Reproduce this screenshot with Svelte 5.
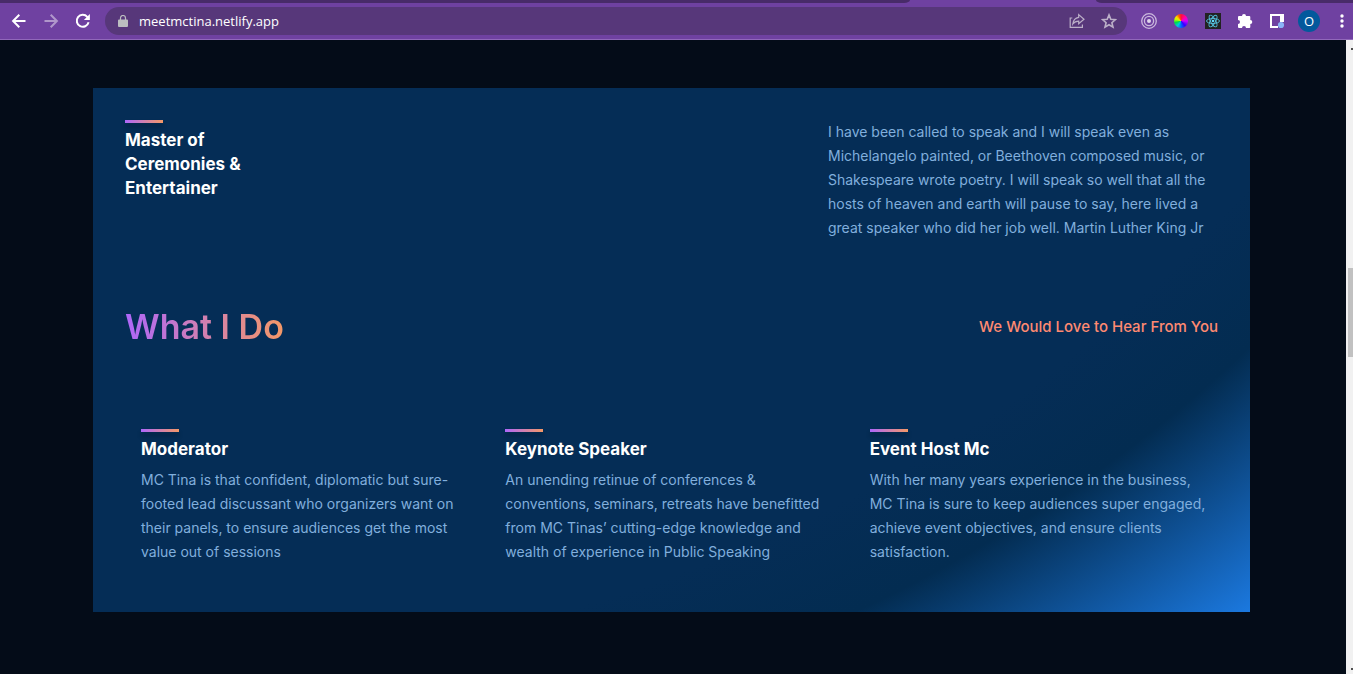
<script>
  const address = 'meetmctina.netlify.app';
  const services = [
    {
      title: 'Moderator',
      lines: ['MC Tina is that confident, diplomatic but sure-', 'footed lead discussant who organizers want on', 'their panels, to ensure audiences get the most', 'value out of sessions']
    },
    {
      title: 'Keynote Speaker',
      lines: ['An unending retinue of conferences &', 'conventions, seminars, retreats have benefitted', 'from MC Tinas’ cutting-edge knowledge and', 'wealth of experience in Public Speaking']
    },
    {
      title: 'Event Host Mc',
      lines: ['With her many years experience in the business,', 'MC Tina is sure to keep audiences super engaged,', 'achieve event objectives, and ensure clients', 'satisfaction.']
    }
  ];
  const quote = [
    'I have been called to speak and I will speak even as',
    'Michelangelo painted, or Beethoven composed music, or',
    'Shakespeare wrote poetry. I will speak so well that all the',
    'hosts of heaven and earth will pause to say, here lived a',
    'great speaker who did her job well. Martin Luther King Jr'
  ];
</script>

<div class="browser">
  <div class="tabs"><span class="tab left"></span><span class="tab right"></span></div>
  <header class="toolbar">
    <nav class="history" aria-label="History">
      <button aria-label="Back">
        <svg viewBox="0 0 16 16"><path d="M14.5 8H2.5M8.3 1.8 2.1 8l6.2 6.2" /></svg>
      </button>
      <button class="dim" aria-label="Forward">
        <svg viewBox="0 0 16 16"><path d="M1.5 8h12M7.7 1.8 13.9 8l-6.2 6.2" /></svg>
      </button>
      <button aria-label="Reload">
        <svg viewBox="0 0 16 16"><path d="M13.6 9.3A6 6 0 1 1 12.3 3.8L13.4 5" /><path class="solid" d="M14.9 1v6H8.9z" /></svg>
      </button>
    </nav>
    <div class="omnibox">
      <svg class="lock" viewBox="0 0 10 12"><path d="M1 4.5h8a1 1 0 0 1 1 1V11a1 1 0 0 1-1 1H1a1 1 0 0 1-1-1V5.500a1 1 0 0 1 1-1z" fill="#bcbec0" /><path d="M2.500 5V3a2.500 2.500 0 0 1 5 0v2" fill="none" stroke="#bcbec0" stroke-width="1.200" /></svg>
      <input aria-label="Address" value={address} />
      <button class="tool" aria-label="Share">
        <svg viewBox="0 0 16 16"><path d="M3.300 5H1.200v9.300h12.200v-2.800" /><path d="M9.700 1.600 15 6.200l-5.300 4.500V8.200C7 8.200 5.300 9 3.800 11c.4-3.400 2.300-6.200 5.900-6.700z" /></svg>
      </button>
      <button class="tool" aria-label="Bookmark">
        <svg viewBox="0 0 16 16"><path stroke-width="1.600" d="m8 1.900 1.800 4.300 4.700.4-3.600 3.100 1.100 4.500L8 11.800l-4 2.400 1.100-4.500-3.600-3.100 4.700-.4z" /></svg>
      </button>
    </div>
    <div class="extensions">
      <button aria-label="Target">
        <svg viewBox="0 0 16 16" fill="none" stroke="#cbb9dd"><circle cx="8" cy="8" r="7.300" stroke-width="1.300" /><circle cx="8" cy="8" r="4.600" stroke-width="1.300" /><circle cx="8" cy="8" r="2" fill="#e0d5eb" stroke="none" /></svg>
      </button>
      <button class="picker" aria-label="Colour picker"><span class="wheel"></span></button>
      <button aria-label="React tools">
        <svg viewBox="0 0 16 16"><rect width="16" height="16" fill="#222" /><g fill="none" stroke="#53c1de" stroke-width="0.9"><ellipse cx="8" cy="8" rx="6.500" ry="2.500" /><ellipse cx="8" cy="8" rx="6.500" ry="2.500" transform="rotate(60 8 8)" /><ellipse cx="8" cy="8" rx="6.500" ry="2.500" transform="rotate(120 8 8)" /></g><circle cx="8" cy="8" r="1.300" fill="#61dafb" /></svg>
      </button>
      <button aria-label="Extensions">
        <svg viewBox="0 0 16 16"><path fill="#fff" d="M5 3a2 2 0 0 1 4 0h3.300a1 1 0 0 1 1 1v3.100a2 2 0 0 1 0 4v3a1 1 0 0 1-1 1H9a2 2 0 0 0-4 0H2a1 1 0 0 1-1-1V11a2 2 0 0 0 0-4V4a1 1 0 0 1 1-1z" /></svg>
      </button>
      <button aria-label="Side panel">
        <svg viewBox="0 0 16 16"><path fill="#fff" d="M1 1h14v8h-4V3H3v10h6v2H1z" /><circle cx="12" cy="12" r="3.100" fill="#8ab4f8" /></svg>
      </button>
      <button class="avatar">O</button>
      <button class="menu" aria-label="Menu">
        <svg viewBox="0 0 16 16" fill="#fff"><circle cx="8" cy="3" r="1.700" /><circle cx="8" cy="8" r="1.700" /><circle cx="8" cy="13" r="1.700" /></svg>
      </button>
    </div>
  </header>

  <div class="viewport">
    <main>
      <section class="panel">
        <div class="intro">
          <div class="feature">
            <h2>Master of<br />Ceremonies &amp;<br />Entertainer</h2>
          </div>
          <p>{#each quote as line}{line}<br />{/each}</p>
        </div>
        <div class="heading">
          <h1>What I Do</h1>
          <a href="#contact">We Would Love to Hear From You</a>
        </div>
        <div class="services">
          {#each services as service}
            <article class="feature">
              <h2>{service.title}</h2>
              <p>{#each service.lines as line}{line}<br />{/each}</p>
            </article>
          {/each}
        </div>
      </section>
    </main>
    <div class="scrollbar"><i class="arrow up"></i><i class="thumb"></i><i class="arrow down"></i></div>
  </div>
</div>

<style>
  :global(body) { background: #040c18; }
  * { box-sizing: border-box; }
  .browser { display: flex; flex-direction: column; min-height: 100vh; font-family: Inter, sans-serif; }
  button { border: 0; padding: 0; background: none; display: grid; place-items: center; }
  button svg { display: block; width: 16px; height: 16px; }

  .tabs { display: flex; justify-content: space-between; height: 3px; background: #6f41a1; }
  .tab { background: #482b69; }
  .tab.left { flex: 0 0 910px; border-bottom-right-radius: 6px 3px; }
  .tab.right { flex: 0 0 257px; border-bottom-left-radius: 6px 3px; }
  .toolbar { display: flex; align-items: center; height: 37px; padding: 0 4px 1px 11px; background: #6f41a1; border-bottom: 1px solid #9168ba; }
  .history { display: flex; gap: 16px; margin-right: 14px; }
  .history svg { fill: none; stroke: #fff; stroke-width: 2; }
  .history .dim { opacity: 0.45; }
  .history .solid { fill: #fff; stroke: none; }
  .omnibox { flex: 1; display: flex; align-items: center; height: 28px; border-radius: 14px; background: #57377a; padding: 0 10px 0 13px; }
  .lock { width: 10px; height: 12px; }
  input { flex: 1; min-width: 0; border: 0; outline: 0; padding: 0; margin-left: 11px; background: none; color: #fff; font: 13px "Open Sans", sans-serif; }
  .tool { margin-left: 16px; }
  .tool svg { fill: none; stroke: #bcb0c8; stroke-width: 1.2px; }
  .extensions { display: flex; align-items: center; gap: 16px; margin-left: 14px; }
  .picker { width: 16px; }
  .wheel { width: 14px; height: 14px; border-radius: 50%; background: conic-gradient(#f13, #f0a 50deg, #c0f 90deg, #30f 140deg, #06f 180deg, #0cd 215deg, #0d4 255deg, #bf0 285deg, #fd0 310deg, #f60 335deg, #f13); }
  .avatar { width: 22px; height: 22px; margin: 0 -3px; border-radius: 50%; background: #03599c; color: #fff; font: 13px "Open Sans", sans-serif; }
  .menu { margin: 0 -1px 0 1px; }

  .viewport { flex: 1; display: flex; }
  main { flex: 1; padding: 48px 96px 62px 93px; background: #040c18; }
  .panel {
    padding: 32px 32px 48px;
    background: radial-gradient(152% 273% at 0 -106%, #052d56 0%, #052d56 80%, #032c51 87%, #1b78de 100%);
  }
  .intro { display: flex; justify-content: space-between; }
  .intro p { flex: 0 0 390px; }
  .feature::before { content: ""; display: block; width: 38px; height: 3px; margin-bottom: 5px; background: linear-gradient(90deg, #ae67fa, #f49867); box-shadow: 0 4px 4px rgba(0, 0, 0, 0.25); }
  h1, h2, p { margin: 0; }
  h2 { color: #fff; font-size: 17px; line-height: 24px; font-weight: 700; }
  p { color: #81afdd; font-size: 14px; line-height: 24px; white-space: nowrap; }
  .heading { display: flex; justify-content: space-between; align-items: center; margin: 64px 0 79px; }
  h1 { font-size: 34px; line-height: 46px; font-weight: 600; color: transparent; background: linear-gradient(90deg, #ae67fa, #f49867); background-clip: text; }
  a { color: #ff8a71; font-size: 15px; line-height: 30px; font-weight: 500; text-decoration: none; }
  .services { display: grid; grid-template-columns: repeat(3, minmax(0, 1fr)); gap: 32px; padding: 0 16px; }
  .services p { margin-top: 7px; }

  .scrollbar { flex: 0 0 7px; display: flex; flex-direction: column; align-items: flex-end; background: #f1f1f1; }
  .thumb { width: 5px; height: 89px; margin: 218px 0 auto; background: #c1c1c1; }
  .arrow { width: 2px; height: 2px; background: #505050; }
  .up { margin-top: 8px; }
  .down { margin-bottom: 4px; }
</style>
